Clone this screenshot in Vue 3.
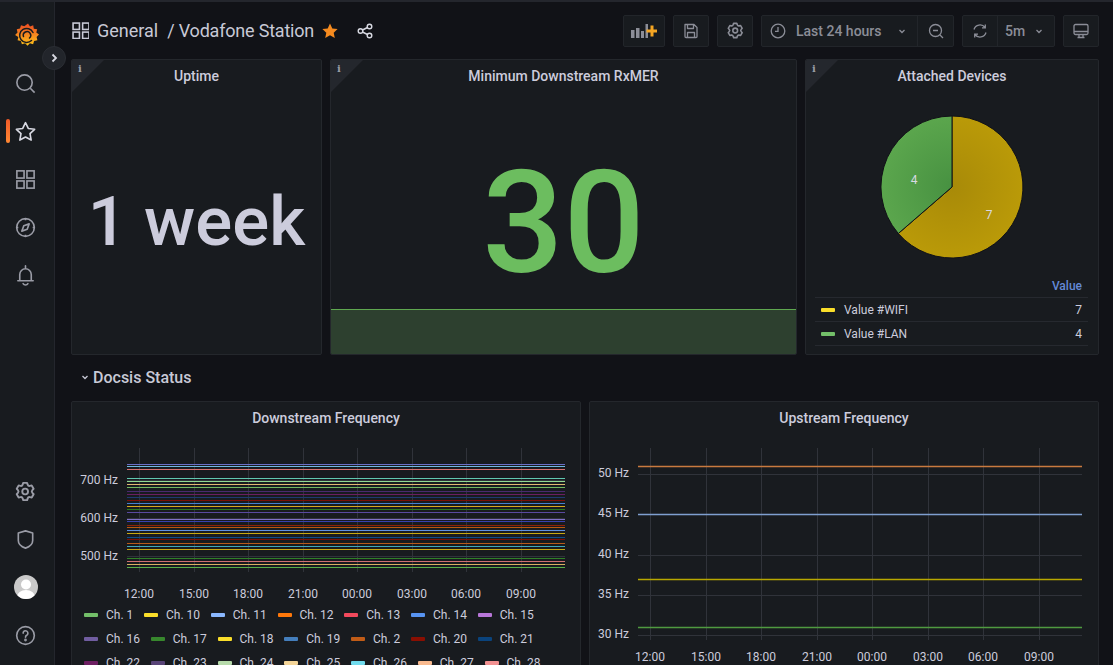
<script setup>
const downLines = [
  [464, '#6a70c8'], [466, '#70b8e0'], [469, '#d87070'],
  [478, '#60c8b0'], [481, '#90d890'], [484, '#e0b870'], [487, '#70b860'],
  [491, '#4a2a70'], [494, '#6a1f62'], [497, '#1f3a70'], [500, '#7a0f08'],
  [503, '#4480d0'], [506, '#d8a820'], [509, '#2a7a20'], [512, '#5a4aa0'],
  [519, '#8070c8'], [521, '#3a40b0'], [525, '#90200a'], [527, '#b85a10'],
  [530, '#6090e0'], [533, '#c8a810'], [537, '#0f4a88'], [539, '#7a0f08'],
  [543, '#b85a18'], [546, '#40a8b8'], [549, '#c8a810'],
  [558, '#2f8028'], [561, '#d07070'], [564, '#d8b060'], [567, '#58b048']
]
const downTicks = [
  [139.5, '12:00'], [194.5, '15:00'], [248.5, '18:00'], [303.5, '21:00'],
  [357.5, '00:00'], [412.5, '03:00'], [466.5, '06:00'], [521.5, '09:00']
]
const upTicks = [
  [650.5, '12:00'], [706.5, '15:00'], [761.5, '18:00'], [817.5, '21:00'],
  [872.5, '00:00'], [928.5, '03:00'], [983.5, '06:00'], [1039.5, '09:00']
]
const upGrid = [
  [474, '50 Hz'], [514, '45 Hz'], [555, '40 Hz'], [595, '35 Hz'], [635, '30 Hz']
]
const upLines = [
  [466, '#c97a3f'], [514, '#7f9fd0'], [579, '#b8a800'], [627, '#4f9a40']
]
const legend = [
  ['Ch. 1', '#73bf69'], ['Ch. 10', '#fade2a'], ['Ch. 11', '#8ab8ff'], ['Ch. 12', '#ff780a'],
  ['Ch. 13', '#f2495c'], ['Ch. 14', '#5794f2'], ['Ch. 15', '#b877d9'],
  ['Ch. 16', '#705da0'], ['Ch. 17', '#37872d'], ['Ch. 18', '#fade2a'], ['Ch. 19', '#447ebc'],
  ['Ch. 2', '#c15c17'], ['Ch. 20', '#890f02'], ['Ch. 21', '#0a437c'],
  ['Ch. 22', '#6d1f62'], ['Ch. 23', '#584477'], ['Ch. 24', '#b7dbab'], ['Ch. 25', '#f4d598'],
  ['Ch. 26', '#70dbed'], ['Ch. 27', '#f9ba8f'], ['Ch. 28', '#f29191']
]
const cog = 'M19.9,12.66a1,1,0,0,1,0-1.32L21.18,9.9a1,1,0,0,0,.12-1.17l-2-3.46a1,1,0,0,0-1.07-.48l-1.88.38a1,1,0,0,1-1.15-.66l-.61-1.83A1,1,0,0,0,13.64,2h-4a1,1,0,0,0-1,.68L8.08,4.51a1,1,0,0,1-1.15.66L5,4.79A1,1,0,0,0,4,5.27L2,8.73A1,1,0,0,0,2.1,9.9l1.27,1.44a1,1,0,0,1,0,1.32L2.1,14.1A1,1,0,0,0,2,15.27l2,3.46a1,1,0,0,0,1.07.48l1.88-.38a1,1,0,0,1,1.15.66l.61,1.83a1,1,0,0,0,1,.68h4a1,1,0,0,0,.95-.68l.61-1.83a1,1,0,0,1,1.15-.66l1.88.38a1,1,0,0,0,1.07-.48l2-3.46a1,1,0,0,0-.12-1.17ZM18.41,14l.8.9-1.28,2.22-1.18-.24a3,3,0,0,0-3.45,2L12.92,20H10.36L10,18.86a3,3,0,0,0-3.45-2l-1.18.24L4.07,14.89l.8-.9a3,3,0,0,0,0-4l-.8-.9L5.35,6.89l1.18.24a3,3,0,0,0,3.45-2L10.36,4h2.56l.38,1.14a3,3,0,0,0,3.45,2l1.18-.24,1.28,2.22-.8.9A3,3,0,0,0,18.41,14ZM11.64,8a4,4,0,1,0,4,4A4,4,0,0,0,11.64,8Zm0,6a2,2,0,1,1,2-2A2,2,0,0,1,11.64,14Z'
</script>

<template>
  <div class="page">
    <div class="strip"></div>
    <div class="shell">
      <aside class="sidebar">
        <div class="side-group">
          <div class="side-item">
            <svg class="logo" viewBox="0 0 24 24">
              <defs>
                <linearGradient id="logoGrad" x1="0" y1="1" x2="0" y2="0">
                  <stop offset="0" stop-color="#fcc419" />
                  <stop offset="1" stop-color="#ee4a25" />
                </linearGradient>
              </defs>
              <path fill="url(#logoGrad)" d="M13 .5l2 3 3.200-1.200.6 3.400 3.400.6-.9 3.200 2.700 2-2.400 2.400.8 3.300-3.300.8-1 3.200-3.200-.9-2.400 2.400-2.400-2.400-3.200.9-1-3.200-3.300-.8.7-3.300L.1 12l2.400-2.400-.7-3.300 3.200-.9 1-3.100 3.300 1z" />
              <path fill="none" stroke="#181b1f" stroke-width="1.500" stroke-linecap="round" d="M18 9.500A7 7 0 1 0 16.500 17.500M8.500 13.500A3.700 3.700 0 1 1 14.500 15" />
            </svg>
          </div>
          <div class="side-item">
            <svg class="ic" viewBox="0 0 24 24"><circle cx="11" cy="11" r="8" /><path d="M17 17l4.500 4.500" /></svg>
          </div>
          <div class="side-item active">
            <span class="active-bar"></span>
            <svg class="ic bright" viewBox="0 0 24 24"><path d="M12 2.800l2.900 6 6.600.9-4.800 4.600 1.200 6.600-5.900-3.200-5.900 3.200 1.200-6.600-4.800-4.600 6.600-.9z" stroke-linejoin="round" /></svg>
          </div>
          <div class="side-item">
            <svg class="ic" viewBox="0 0 24 24"><rect x="3" y="3" width="7.500" height="7.500" /><rect x="13.500" y="3" width="7.500" height="7.500" /><rect x="3" y="13.500" width="7.500" height="7.500" /><rect x="13.500" y="13.500" width="7.500" height="7.500" /></svg>
          </div>
          <div class="side-item">
            <svg class="ic" viewBox="0 0 24 24"><circle cx="12" cy="12" r="9.200" /><path d="M15.800 8.200l-2 5.600-5.600 2 2-5.600zM12 2.800v1.700M12 19.500v1.700M2.800 12h1.700M19.500 12h1.700" stroke-linejoin="round" /></svg>
          </div>
          <div class="side-item">
            <svg class="ic" viewBox="0 0 24 24"><path d="M12 2v2M6 17v-6a6 6 0 0 1 12 0v6M4 17.500h16M9.500 20.500c.6 1 1.400 1.400 2.500 1.400s1.900-.4 2.500-1.400" stroke-linecap="round" /></svg>
          </div>
        </div>
        <div class="side-group">
          <div class="side-item">
            <svg class="ic solid" viewBox="0 0 24 24"><path :d="cog" /></svg>
          </div>
          <div class="side-item">
            <svg class="ic" viewBox="0 0 24 24"><path d="M12 3l7.500 2.300V13c0 3.800-3.200 6.500-7.500 8-4.300-1.500-7.500-4.200-7.500-8V5.300z" stroke-linejoin="round" /></svg>
          </div>
          <div class="side-item">
            <svg class="avatar" viewBox="0 0 24 24">
              <defs><clipPath id="avatarClip"><circle cx="12" cy="12" r="12" /></clipPath></defs>
              <g clip-path="url(#avatarClip)">
                <rect width="24" height="24" fill="#c9c9c9" />
                <circle cx="12" cy="9.500" r="5" fill="#fff" />
                <ellipse cx="12" cy="22" rx="9" ry="7" fill="#fff" />
              </g>
            </svg>
          </div>
          <div class="side-item">
            <svg class="ic" viewBox="0 0 24 24"><circle cx="12" cy="12" r="9.200" /><path d="M9.500 9.500a2.500 2.500 0 1 1 3.800 2.200c-.9.500-1.300 1-1.300 2" stroke-linecap="round" /><circle class="dot" cx="12" cy="16.700" r=".6" /></svg>
          </div>
        </div>
      </aside>
      <button class="side-toggle">
        <svg viewBox="0 0 12 12"><path d="M4.500 2.500L8 6l-3.500 3.500" /></svg>
      </button>

      <main class="main">
        <header class="topbar">
          <div class="crumbs">
            <svg class="crumb-ic" viewBox="0 0 16 16"><rect x="1" y="1" width="6" height="6" /><rect x="10" y="1" width="6" height="6" /><rect x="1" y="9.500" width="6" height="6" /><rect x="10" y="9.500" width="6" height="6" /></svg>
            <span class="crumb">General</span>
            <span class="crumb tight">/ Vodafone Station</span>
            <svg class="fav" viewBox="0 0 16 16"><path d="M8 .5l2.300 5 5.300.6-3.900 3.600 1.100 5.300L8 12.300 3.200 15l1.100-5.300L.4 6.100l5.300-.6z" /></svg>
            <svg class="share" viewBox="0 0 16 16"><circle cx="3.500" cy="8" r="2.300" /><circle cx="12.500" cy="3.500" r="2.300" /><circle cx="12.500" cy="12.500" r="2.300" /><path d="M5.500 7l5-2.500M5.500 9l5 2.500" /></svg>
          </div>
          <div class="tools">
            <button class="tbtn wide">
              <svg class="tool-ic" viewBox="0 0 26 14">
                <path class="bars" d="M0 6h3.500v8H0zM5 4h3.500v10H5zM10 7h3v7h-3zM14.500 0H17v14h-2.500z" />
                <path class="plus" d="M15.500 5.500h4V1.500h3v4h3.500v3h-3.500v4h-3v-4h-4z" />
              </svg>
            </button>
            <button class="tbtn">
              <svg class="tic" viewBox="0 0 16 16"><path d="M2 1.500h9l3 3v9a1 1 0 0 1-1 1H3a1 1 0 0 1-1-1zM4.500 1.500v4h6v-4M4.500 14.500V9.500h7v5" stroke-linejoin="round" /></svg>
            </button>
            <button class="tbtn">
              <svg class="tic solid" viewBox="0 0 24 24"><path :d="cog" /></svg>
            </button>
            <div class="tgroup">
              <button class="tbtn inner time">
                <svg class="tic" viewBox="0 0 16 16"><circle cx="8" cy="8" r="6.800" /><path d="M8 4v4.300H5" /></svg>
                <span>Last 24 hours</span>
                <svg class="chev" viewBox="0 0 10 10"><path d="M2.500 4l2.500 2.500L7.500 4" /></svg>
              </button>
              <button class="tbtn inner">
                <svg class="tic" viewBox="0 0 16 16"><circle cx="7.500" cy="7.500" r="6" /><path d="M5 7.500h5M12 12l3 3" /></svg>
              </button>
            </div>
            <div class="tgroup">
              <button class="tbtn inner sync">
                <svg class="tic" viewBox="0 0 16 16"><path d="M2 6.500A6.200 6.200 0 0 1 13 4.500M14 9.500A6.200 6.200 0 0 1 3 11.500M13.300 1.500v3.300H10M2.700 14.500v-3.300H6" /></svg>
              </button>
              <button class="tbtn inner refresh">
                <span>5m</span>
                <svg class="chev" viewBox="0 0 10 10"><path d="M2.500 4l2.500 2.500L7.500 4" /></svg>
              </button>
            </div>
            <button class="tbtn">
              <svg class="tic" viewBox="0 0 16 16"><rect x="1" y="1.500" width="14" height="10" rx="1.500" /><path d="M1 8.500h14M4.500 14.500h7M6 11.500v3M10 11.500v3" /></svg>
            </button>
          </div>
        </header>

        <section class="row-top">
          <div class="panel">
            <span class="corner"><i>i</i></span>
            <h3 class="panel-title">Uptime</h3>
            <div class="stat week">1 week</div>
          </div>
          <div class="panel">
            <span class="corner"><i>i</i></span>
            <h3 class="panel-title">Minimum Downstream RxMER</h3>
            <div class="stat thirty">30</div>
            <div class="spark"></div>
          </div>
          <div class="panel">
            <span class="corner"><i>i</i></span>
            <h3 class="panel-title">Attached Devices</h3>
            <div class="pie-wrap">
              <svg class="pie" viewBox="-72 -72 144 144">
                <defs>
                  <radialGradient id="pieY" gradientUnits="userSpaceOnUse" cx="0" cy="0" r="71">
                    <stop offset="0" stop-color="#a88a08" />
                    <stop offset="1" stop-color="#ba9a08" />
                  </radialGradient>
                  <radialGradient id="pieG" gradientUnits="userSpaceOnUse" cx="0" cy="0" r="71">
                    <stop offset="0" stop-color="#479141" />
                    <stop offset="1" stop-color="#5ba64d" />
                  </radialGradient>
                </defs>
                <path d="M0 0V-71A71 71 0 1 1 -53.700 46.500Z" fill="url(#pieY)" stroke="#111217" stroke-width="1" />
                <path d="M0 0L-53.700 46.500A71 71 0 0 1 0 -71Z" fill="url(#pieG)" stroke="#111217" stroke-width="1" />
                <text class="pie-num" x="-38" y="-3">4</text>
                <text class="pie-num" x="37" y="32">7</text>
              </svg>
            </div>
            <div class="pie-table">
              <div class="pie-head">Value</div>
              <div class="pie-row">
                <span class="swatch" style="background: #fade2a"></span>
                <span class="pie-label">Value #WIFI</span>
                <span>7</span>
              </div>
              <div class="pie-row">
                <span class="swatch" style="background: #73bf69"></span>
                <span class="pie-label">Value #LAN</span>
                <span>4</span>
              </div>
            </div>
          </div>
        </section>

        <div class="row-head">
          <svg class="chev head-chev" viewBox="0 0 10 10"><path d="M2.500 4l2.500 2.500L7.500 4" /></svg>
          <span>Docsis Status</span>
        </div>

        <section class="row-charts">
          <div class="panel chart-panel">
            <h3 class="panel-title chart-title">Downstream Frequency</h3>
            <svg class="chart down" viewBox="72 436 508 167">
              <g class="grid">
                <line v-for="t in downTicks" :key="t[1]" :x1="t[0]" :x2="t[0]" y1="448" y2="572" />
                <line x1="127" x2="565" y1="480.500" y2="480.500" />
                <line x1="127" x2="565" y1="518.500" y2="518.500" />
                <line x1="127" x2="565" y1="556.500" y2="556.500" />
              </g>
              <line v-for="l in downLines" :key="l[0]" x1="127" x2="565" :y1="l[0] + 0.5" :y2="l[0] + 0.5" :stroke="l[1]" />
              <text class="axis end" x="118" y="484">700 Hz</text>
              <text class="axis end" x="118" y="522">600 Hz</text>
              <text class="axis end" x="118" y="560">500 Hz</text>
              <text v-for="t in downTicks" :key="t[1]" class="axis mid" :x="t[0] - 0.5" y="598">{{ t[1] }}</text>
            </svg>
            <div class="legend">
              <div v-for="item in legend" :key="item[0]" class="legend-item">
                <span class="swatch" :style="{ background: item[1] }"></span>
                <span>{{ item[0] }}</span>
              </div>
            </div>
          </div>
          <div class="panel chart-panel">
            <h3 class="panel-title chart-title">Upstream Frequency</h3>
            <svg class="chart up" viewBox="590 436 508 228">
              <g class="grid">
                <line v-for="t in upTicks" :key="t[1]" :x1="t[0]" :x2="t[0]" y1="448" y2="640" />
                <line v-for="g in upGrid" :key="g[1]" x1="638" x2="1082" :y1="g[0] + 0.5" :y2="g[0] + 0.5" />
              </g>
              <line v-for="l in upLines" :key="l[0]" class="series" x1="638" x2="1082" :y1="l[0] + 0.5" :y2="l[0] + 0.5" :stroke="l[1]" />
              <text v-for="g in upGrid" :key="g[1]" class="axis end" x="629" :y="g[0] + 3">{{ g[1] }}</text>
              <text v-for="t in upTicks" :key="t[1]" class="axis mid" :x="t[0] - 0.5" y="661">{{ t[1] }}</text>
            </svg>
          </div>
        </section>
      </main>
    </div>
  </div>
</template>

<style>
html,
body {
  margin: 0;
  height: 100%;
  overflow: hidden;
  background: #111217;
}
</style>

<style scoped>
.page {
  height: 665px;
  display: flex;
  flex-direction: column;
  overflow: hidden;
  background: #111217;
  color: #ccccdc;
  font-family: Roboto, "Liberation Sans", sans-serif;
  font-size: 12px;
}

.strip {
  height: 2px;
  flex: none;
  background: #24262d;
}

.shell {
  flex: 1;
  min-height: 0;
  display: flex;
  position: relative;
}

/* Sidebar */
.sidebar {
  width: 55px;
  flex: none;
  box-sizing: border-box;
  padding: 9px 0 6px;
  display: flex;
  flex-direction: column;
  justify-content: space-between;
  background: #181b1f;
  border-right: 1px solid #24262d;
}

.side-item {
  height: 48px;
  display: flex;
  align-items: center;
  justify-content: center;
  position: relative;
}

.active-bar {
  position: absolute;
  left: 6px;
  top: 12px;
  width: 4px;
  height: 24px;
  border-radius: 2px;
  background: linear-gradient(#f05a28, #ff8833);
}

.logo {
  width: 24px;
  height: 24px;
}

.ic {
  width: 23px;
  height: 23px;
  fill: none;
  stroke: #9a9ca6;
  stroke-width: 1.7;
  margin-left: -3px;
}

.ic.bright {
  stroke: #d8d9e2;
}

.ic.solid,
.tic.solid {
  fill: #9a9ca6;
  stroke: none;
}

.tic.solid {
  width: 19px;
  height: 19px;
  fill: #8b8d97;
}

.ic .dot {
  fill: #9a9ca6;
}

.avatar {
  width: 24px;
  height: 24px;
  margin-left: -2px;
}

.side-toggle {
  position: absolute;
  left: 42px;
  top: 44px;
  width: 24px;
  height: 24px;
  padding: 0;
  border: 1px solid #2a2d33;
  border-radius: 50%;
  background: #22252b;
  display: flex;
  align-items: center;
  justify-content: center;
  z-index: 2;
}

.side-toggle svg {
  width: 12px;
  height: 12px;
  fill: none;
  stroke: #d8d9e2;
  stroke-width: 1.8;
}

/* Header */
.main {
  flex: 1;
  min-width: 0;
  box-sizing: border-box;
  padding: 0 14px 0 16px;
}

.topbar {
  height: 57px;
  display: flex;
  align-items: center;
  justify-content: space-between;
}

.crumbs {
  display: flex;
  align-items: center;
  font-size: 18px;
  color: #c8c9d6;
}

.crumb-ic {
  width: 17px;
  height: 17px;
  fill: none;
  stroke: #c8c9d6;
  stroke-width: 1.5;
  margin: 0 8px 0 1px;
}

.crumb {
  margin-right: 9px;
}

.crumb.tight {
  letter-spacing: -0.2px;
  margin-right: 8px;
}

.fav {
  width: 16px;
  height: 16px;
  fill: #f58a1f;
  margin-right: 19px;
}

.share {
  width: 16px;
  height: 16px;
  fill: none;
  stroke: #d8d9e2;
  stroke-width: 1.4;
}

.tools {
  display: flex;
  align-items: center;
  gap: 8px;
}

.tgroup {
  display: flex;
  height: 32px;
  box-sizing: border-box;
  border: 1px solid #22252a;
  border-radius: 2px;
  background: #181b1f;
}

.tbtn {
  width: 36px;
  height: 32px;
  box-sizing: border-box;
  padding: 0;
  border: 1px solid #22252a;
  border-radius: 2px;
  background: #181b1f;
  color: #8b8d97;
  font-family: inherit;
  font-size: 14px;
  font-weight: 500;
  display: flex;
  align-items: center;
  justify-content: center;
}

.tbtn.wide {
  width: 42px;
}

.tbtn.inner {
  height: 30px;
  border: 0;
  border-radius: 0;
  background: transparent;
}

.tbtn.inner + .tbtn.inner {
  border-left: 1px solid #22252a;
}

.tbtn.time {
  width: 155px;
  justify-content: flex-start;
  padding-left: 8px;
}

.tbtn.time span {
  margin-left: 10px;
}

.tbtn.time .chev {
  margin-left: 15px;
}

.tbtn.sync {
  width: 34px;
}

.tbtn.refresh {
  width: 57px;
  padding-right: 3px;
}

.tbtn.refresh .chev {
  margin-left: 9px;
}

.tic {
  width: 16px;
  height: 16px;
  fill: none;
  stroke: #8b8d97;
  stroke-width: 1.3;
}

.tool-ic {
  width: 26px;
  height: 14px;
}

.tool-ic .bars {
  fill: #8b8d97;
}

.tool-ic .plus {
  fill: #f5a623;
}

.chev {
  width: 10px;
  height: 10px;
  fill: none;
  stroke: #8b8d97;
  stroke-width: 1.3;
}

/* Panels */
.panel {
  box-sizing: border-box;
  position: relative;
  display: flex;
  flex-direction: column;
  overflow: hidden;
  background: #181b1f;
  border: 1px solid #24272c;
  border-radius: 2px;
}

.panel-title {
  margin: 0;
  height: 31px;
  flex: none;
  display: flex;
  align-items: center;
  justify-content: center;
  font-size: 14px;
  font-weight: 500;
  color: #ccccdc;
}

.corner {
  position: absolute;
  left: 0;
  top: 0;
  width: 32px;
  height: 32px;
  background: #24272d;
  clip-path: polygon(0 0, 100% 0, 0 100%);
}

.corner i {
  position: absolute;
  left: 6px;
  top: 3px;
  font: bold 10px "DejaVu Serif", serif;
  color: #9a9ca6;
}

.row-top {
  display: grid;
  grid-template-columns: 251px 467px 294px;
  gap: 8px;
  height: 296px;
}

.stat {
  flex: 1;
  display: flex;
  align-items: center;
  justify-content: center;
  font-weight: 500;
  white-space: nowrap;
}

.week {
  font-size: 69px;
  color: #ccccdc;
  padding-bottom: 2px;
}

.thirty {
  font-size: 143px;
  color: #6cbd5f;
  padding-top: 1px;
}

.spark {
  position: absolute;
  left: 0;
  right: 0;
  bottom: 0;
  height: 45px;
  box-sizing: border-box;
  background: #2d402f;
  border-top: 1px solid #5fa850;
}

.pie-wrap {
  display: flex;
  justify-content: center;
  margin-top: 24px;
}

.pie {
  width: 144px;
  height: 144px;
}

.pie-num {
  fill: #d8d9e2;
  font-size: 12px;
  text-anchor: middle;
}

.pie-table {
  margin: 15px 10px 0 9px;
  font-size: 12px;
}

.pie-head {
  height: 24px;
  box-sizing: border-box;
  padding-right: 6px;
  display: flex;
  align-items: center;
  justify-content: flex-end;
  font-weight: 500;
  color: #6489d6;
  border-bottom: 1px solid #26292f;
}

.pie-row {
  height: 24px;
  box-sizing: border-box;
  padding: 0 6px;
  display: flex;
  align-items: center;
  border-bottom: 1px solid #26292f;
}

.pie-label {
  flex: 1;
  margin-left: 9px;
}

.swatch {
  width: 14px;
  height: 4px;
  flex: none;
  border-radius: 1px;
}

.row-head {
  height: 46px;
  box-sizing: border-box;
  padding: 0 0 2px 9px;
  display: flex;
  align-items: center;
  font-size: 16px;
  font-weight: 500;
  color: #c8c9d6;
}

.head-chev {
  stroke: #c8c9d6;
  margin-right: 3px;
}

/* Charts */
.row-charts {
  display: grid;
  grid-template-columns: 510px 510px;
  gap: 8px;
}

.chart-panel {
  height: 320px;
}

.chart-title {
  height: 34px;
  box-sizing: border-box;
  padding-bottom: 2px;
}

.chart {
  display: block;
  width: 508px;
  flex: none;
}

.chart.down {
  height: 167px;
}

.chart.up {
  height: 228px;
}

.series {
  stroke-width: 1.4;
}

.grid line {
  stroke: #30333a;
}

.axis {
  fill: #ccccdc;
  font-size: 12px;
}

.axis.end {
  text-anchor: end;
}

.axis.mid {
  text-anchor: middle;
}

.legend {
  display: flex;
  flex-wrap: wrap;
  width: 486px;
  padding-left: 12px;
  column-gap: 10.7px;
}

.legend-item {
  height: 24px;
  display: flex;
  align-items: center;
  gap: 8px;
}
</style>
